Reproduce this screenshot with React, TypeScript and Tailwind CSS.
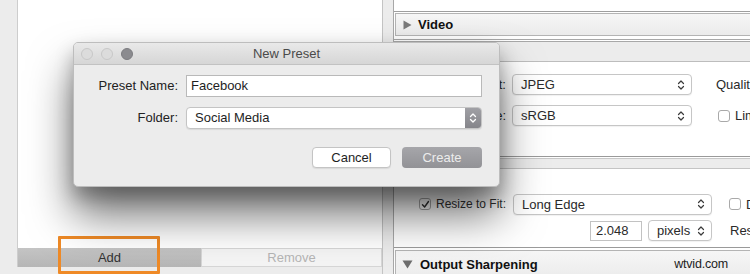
import React from "react";

const Chev = () => (
  <svg width="8" height="12" viewBox="0 0 8 12" fill="none">
    <path d="M1.5 4.5 L4 2 L6.5 4.5" stroke="#3a3a3a" strokeWidth="1.2" strokeLinecap="round" strokeLinejoin="round" />
    <path d="M1.5 7.5 L4 10 L6.5 7.5" stroke="#3a3a3a" strokeWidth="1.2" strokeLinecap="round" strokeLinejoin="round" />
  </svg>
);

const Select = ({ label, className }: { label: string; className: string }) => (
  <div className={"h-[21px] shrink-0 rounded-[4px] border border-[#c6c6c6] bg-white shadow-[0_1px_1px_rgba(0,0,0,0.06)] flex items-center justify-between pl-[8px] pr-[6px] " + className}>
    <span>{label}</span>
    <Chev />
  </div>
);

const Check = ({ checked }: { checked?: boolean }) => (
  <div className="w-[12px] h-[12px] shrink-0 rounded-[3px] border border-[#a9a9a9] bg-white flex items-center justify-center">
    {checked && (
      <svg width="9" height="9" viewBox="0 0 9 9" fill="none">
        <path d="M1.5 4.8 L3.6 7 L7.5 1.5" stroke="#333" strokeWidth="1.4" strokeLinecap="round" strokeLinejoin="round" />
      </svg>
    )}
  </div>
);

export default function App() {
  return (
    <div
      className="relative w-[750px] h-[274px] overflow-hidden flex bg-[#ececec] text-[13px] text-[#2a2a2a]"
      style={{ fontFamily: '"Liberation Sans", Arial, sans-serif' }}
    >
      {/* Left column */}
      <div className="w-[382px] flex flex-col shrink-0">
        <div className="flex-1 flex">
          <div className="w-[17px] bg-[#ececec]" />
          <div className="flex-1 bg-white border-l border-[#cdcdcd]" />
        </div>
        <div className="h-[19px] ml-[17px] flex border-l border-[#cdcdcd]">
          <div className="w-[183px] bg-gradient-to-b from-[#c4c4c4] to-[#b6b6b6] flex items-center justify-center text-[#333]">
            Add
          </div>
          <div className="flex-1 bg-[#f4f4f4] border border-[#d6d6d6] flex items-center justify-center text-[#b4b4b4]">
            Remove
          </div>
        </div>
        <div className="h-[7px]" />
      </div>

      {/* Divider */}
      <div className="w-[11px] shrink-0 border-l border-[#c4c4c4] bg-[#ececec]" />

      {/* Right panel */}
      <div className="flex-1 min-w-0 overflow-hidden flex flex-col bg-white border-l border-[#a8a8a8]">
        <div className="h-[11px] bg-white" />
        <div className="border-t border-[#9e9e9e] pl-[1px] pt-[1px] h-[26px]">
          <div className="h-[23px] pt-[1px] border border-[#b4b4b4] border-r-0 bg-gradient-to-b from-[#f6f6f6] to-[#ebebeb] flex items-center pl-[7px] gap-[6px]">
            <svg width="9" height="10" viewBox="0 0 9 10"><path d="M0.5 0.5 L8.5 5 L0.5 9.5 Z" fill="#7a7a7a" /></svg>
            <span className="font-bold text-[#111]">Video</span>
          </div>
        </div>
        <div className="h-[3px] bg-white" />
        <div className="h-[3px] border-t border-b border-[#a8a8a8] bg-white" />
        <div className="h-[20px] bg-[#ececec]" />
        <div className="h-[97px] border-t border-[#bdbdbd] bg-white flex flex-col pt-[12px] gap-[10px]">
          <div className="flex items-center h-[21px] whitespace-nowrap">
            <span className="w-[118px] shrink-0 text-right pr-[6px]">Format:</span>
            <Select label="JPEG" className="w-[180px]" />
            <span className="ml-[24px]">Quality</span>
          </div>
          <div className="flex items-center h-[21px] whitespace-nowrap">
            <span className="w-[118px] shrink-0 text-right pr-[6px]">Color Space:</span>
            <Select label="sRGB" className="w-[180px]" />
            <span className="ml-[26px] flex items-center gap-[5px]"><Check />Limit</span>
          </div>
        </div>
        <div className="h-[3px] border-t border-b border-[#9a9a9a] border-b-[#c8c8c8] bg-white" />
        <div className="h-[9px] bg-[#ececec]" />
        <div className="h-[80px] border-t border-[#c4c4c4] bg-white flex flex-col pt-[25px]">
          <div className="flex items-center h-[21px] whitespace-nowrap">
            <div className="w-[25px] shrink-0" />
            <Check checked />
            <span className="ml-[5px] w-[77px] shrink-0 text-[12px] text-[#333]">Resize to Fit:</span>
            <Select label="Long Edge" className="w-[199px]" />
            <div className="ml-[17px] flex items-center gap-[5px]"><Check /><span>Don't</span></div>
          </div>
          <div className="flex items-center h-[20px] mt-[6px] whitespace-nowrap">
            <div className="w-[196px] shrink-0" />
            <div className="w-[52px] shrink-0 h-[20px] border border-[#c2c2c2] bg-white flex items-center pl-[5px]">2.048</div>
            <Select label="pixels" className="w-[64px] ml-[6px]" />
            <span className="ml-[18px]">Resolution</span>
          </div>
        </div>
        <div className="h-[3px] border-t border-[#9a9a9a] bg-white" />
        <div className="flex-1 ml-[1px] pt-[4px] border border-[#b4b4b4] border-r-0 border-b-0 bg-gradient-to-b from-[#f6f6f6] to-[#ededed] flex items-center pl-[6px] gap-[7px] whitespace-nowrap">
          <svg width="11" height="9" viewBox="0 0 11 9"><path d="M0.5 0.5 L10.5 0.5 L5.5 8.5 Z" fill="#6e6e6e" /></svg>
          <span className="font-bold text-[#111]">Output Sharpening</span>
          <span className="ml-auto mr-[22px] text-[12.5px] text-[#222] tracking-[-0.2px]">wtvid.com</span>
        </div>
      </div>

      {/* Orange highlight */}
      <div className="absolute left-[58px] top-[236px] w-[102px] h-[38px] border-[3px] border-[#ef8a26] rounded-[1px]" />

      {/* Dialog */}
      <div className="absolute left-[73px] top-[42px] w-[427px] h-[145px] rounded-[5px] bg-[#ececec] border border-[#bdbdbd] shadow-[0_28px_44px_rgba(0,0,0,0.55),0_10px_18px_rgba(0,0,0,0.25)] flex flex-col overflow-hidden">
        <div className="relative h-[22px] bg-gradient-to-b from-[#e9e9e9] to-[#d6d6d6] border-b border-[#c2c2c2] flex items-center justify-center">
          <div className="absolute left-[7px] top-[5px] flex gap-[8px]">
            <div className="w-[12px] h-[12px] rounded-full bg-[#dcdcdc] border border-[#c8c8c8]" />
            <div className="w-[12px] h-[12px] rounded-full bg-[#dcdcdc] border border-[#c8c8c8]" />
            <div className="w-[12px] h-[12px] rounded-full bg-[#8b8b8f] border border-[#7c7c80]" />
          </div>
          <span className="text-[#4a4a4a]">New Preset</span>
        </div>
        <div className="flex flex-col pt-[10px]">
          <div className="flex items-center h-[22px]">
            <span className="w-[104px] text-right text-[#222]">Preset Name:</span>
            <div className="ml-[8px] w-[296px] h-[22px] border border-[#b9b9b9] bg-white flex items-center pl-[4px] text-[#1e1e1e]">Facebook</div>
          </div>
          <div className="flex items-center h-[22px] mt-[10px]">
            <span className="w-[104px] text-right text-[#222]">Folder:</span>
            <div className="ml-[8px] w-[296px] h-[22px] rounded-[4px] border border-[#c4c4c4] bg-white shadow-[0_1px_1px_rgba(0,0,0,0.08)] flex items-center justify-between overflow-hidden">
              <span className="pl-[8px] text-[#1e1e1e]">Social Media</span>
              <div className="w-[16px] h-full bg-gradient-to-b from-[#a0a0a5] to-[#85858a] flex items-center justify-center">
                <svg width="8" height="12" viewBox="0 0 8 12" fill="none">
                  <path d="M1.5 4.5 L4 2 L6.5 4.5" stroke="#fff" strokeWidth="1.3" strokeLinecap="round" strokeLinejoin="round" />
                  <path d="M1.5 7.5 L4 10 L6.5 7.5" stroke="#fff" strokeWidth="1.3" strokeLinecap="round" strokeLinejoin="round" />
                </svg>
              </div>
            </div>
          </div>
          <div className="flex items-center h-[21px] mt-[18px] pl-[238px] gap-[11px]">
            <div className="w-[79px] h-[21px] rounded-[4px] border border-[#c4c4c4] bg-white shadow-[0_1px_1px_rgba(0,0,0,0.08)] flex items-center justify-center text-[#1e1e1e]">Cancel</div>
            <div className="w-[80px] h-[21px] rounded-[4px] bg-gradient-to-b from-[#a6a6aa] to-[#929296] flex items-center justify-center text-[#ececec]">Create</div>
          </div>
        </div>
      </div>
    </div>
  );
}
